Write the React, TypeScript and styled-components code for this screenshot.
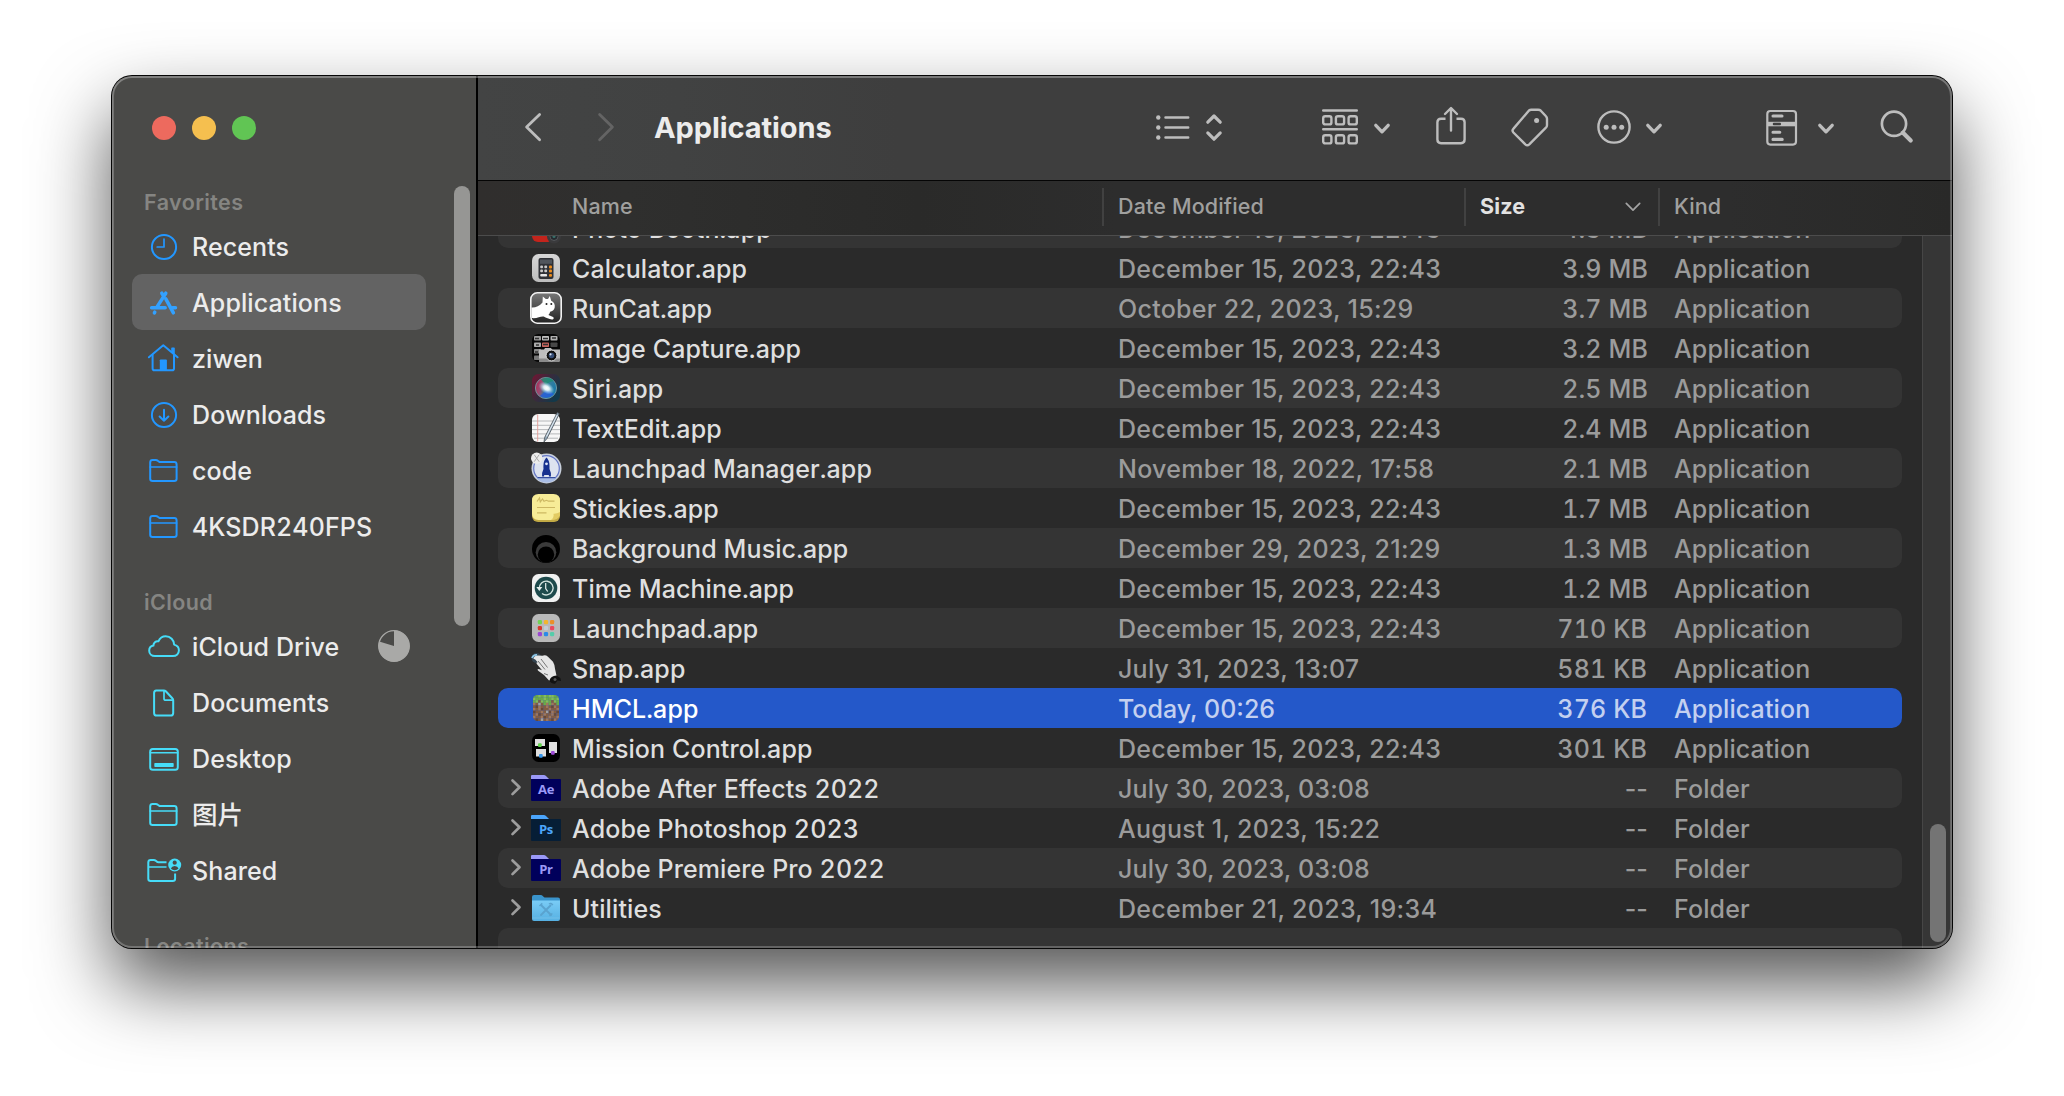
import React from "react";
import styled, { createGlobalStyle } from "styled-components";

const GlobalStyle = createGlobalStyle`
  html, body { margin: 0; padding: 0; background: #fff; }
  *, *::before, *::after { box-sizing: border-box; }
  svg { display: block; flex: none; overflow: visible; }
`;

const Screen = styled.div`
  width: 2064px;
  height: 1096px;
  padding: 76px 112px 148px;
  overflow: hidden;
  background: #fff;
  font-family: Inter, "Noto Sans CJK SC", "Liberation Sans", sans-serif;
`;

const Window = styled.div`
  position: relative;
  display: flex;
  width: 1840px;
  height: 872px;
  border-radius: 20px;
  background: #000;
  box-shadow: 0 0 0 1px #060606, 0 36px 76px rgba(0, 0, 0, 0.68);
`;

const Rim = styled.div`
  position: absolute;
  inset: 0;
  border-radius: 20px;
  pointer-events: none;
  box-shadow: inset 0 0 0 2px rgba(255, 255, 255, 0.23), inset 0 1px 0 1px rgba(255, 255, 255, 0.1);
`;

const Sidebar = styled.aside`
  display: flex;
  width: 364px;
  height: 872px;
  overflow: hidden;
  border-radius: 20px 0 0 20px;
  background: #4a4a48;
`;

const SidebarBody = styled.div`
  width: 342px;
  padding-left: 20px;
`;

const Lights = styled.div`
  display: flex;
  gap: 16px;
  height: 78px;
  padding: 40px 0 0 20px;
`;

const Light = styled.span<{ $color: string }>`
  width: 24px;
  height: 24px;
  border-radius: 50%;
  background: ${(p) => p.$color};
`;

const SideHeading = styled.h2`
  height: 64px;
  margin: 0;
  padding: 33px 0 0 12px;
  color: #858582;
  font-size: 21.5px;
  font-weight: 640;
  line-height: 30px;
  letter-spacing: 0.4px;
`;

const SideItem = styled.div<{ $active?: boolean; $color: string }>`
  display: flex;
  align-items: center;
  width: 294px;
  height: 56px;
  padding-left: 14px;
  border-radius: 10px;
  background: ${(p) => (p.$active ? "#636363" : "transparent")};
  color: ${(p) => p.$color};
`;

const SideLabel = styled.span<{ $cjk?: boolean }>`
  flex: 1;
  padding: 2px 0 0 10px;
  color: #ececec;
  font-size: ${(p) => (p.$cjk ? 25.5 : 25)}px;
  font-weight: ${(p) => (p.$cjk ? 500 : 460)};
  font-variant-numeric: tabular-nums;
  line-height: 40px;
  letter-spacing: 0.1px;
  white-space: nowrap;
`;

const PieSlot = styled.span`
  padding-right: 16px;
`;

const SideScroll = styled.div`
  width: 16px;
  height: 440px;
  margin-top: 110px;
  border-radius: 8px;
  background: #969694;
`;

const Main = styled.main`
  display: flex;
  flex-direction: column;
  width: 1474px;
  height: 872px;
  margin-left: 2px;
  overflow: hidden;
  border-radius: 0 20px 20px 0;
  background: #2a2a2a;
`;

const Toolbar = styled.header`
  display: flex;
  align-items: center;
  height: 105px;
  padding: 0 0 3px 43px;
  border-bottom: 1px solid #050505;
  background: linear-gradient(90deg, #434444 0, #414242 200px, #3e3e3e 420px, #3e3e3e 100%);
  color: #bdbdbd;
`;

const ToolIcon = styled.span<{ $gap: number; $dim?: boolean }>`
  margin-left: ${(p) => p.$gap}px;
  color: ${(p) => (p.$dim ? "#646464" : "inherit")};
`;

const Title = styled.h1`
  width: 466px;
  margin: 0 0 0 37px;
  padding-top: 2px;
  color: #ececec;
  font-size: 29px;
  font-weight: 700;
  line-height: 40px;
  letter-spacing: -0.08px;
`;

const HeaderRow = styled.div`
  display: flex;
  height: 55px;
  padding-top: 7px;
  border-bottom: 1px solid #4c4c4c;
  background: linear-gradient(90deg, #302e2d 0, #2f2f2e 150px, #2a2a29 440px, #2d2d2d 640px, #2d2d2d 1250px, #292928 100%);
`;

const HeaderCell = styled.div<{ $width: number; $pad: number; $strong?: boolean }>`
  display: flex;
  align-items: center;
  justify-content: space-between;
  width: ${(p) => p.$width}px;
  height: 38px;
  padding: 0 17px 3px ${(p) => p.$pad}px;
  border-right: 2px solid #414141;
  color: ${(p) => (p.$strong ? "#e2e2e2" : "#a0a09f")};
  font-size: 21.5px;
  font-weight: ${(p) => (p.$strong ? 700 : 500)};
  line-height: 26px;
  letter-spacing: 0.14px;
  white-space: nowrap;
  &:last-child { border-right: 0; }
`;

const ListArea = styled.div`
  display: flex;
  flex: 1;
  min-height: 0;
`;

const Rows = styled.div`
  display: flex;
  flex-direction: column;
  justify-content: flex-end;
  width: 1444px;
  padding: 0 20px;
  height: 712px;
  overflow: hidden;
`;

const Row = styled.div<{ $alt?: boolean; $selected?: boolean }>`
  display: flex;
  align-items: center;
  flex: none;
  width: 1404px;
  height: 40px;
  border-radius: 10px;
  background: ${(p) => (p.$selected ? "#2458c9" : p.$alt ? "#343434" : "transparent")};
  --name: ${(p) => (p.$selected ? "#ffffff" : "#dfdfdf")};
  --meta: ${(p) => (p.$selected ? "#c3d0f0" : "#9b9b9b")};
`;

const TailRow = styled(Row)`
  height: 20px;
  border-radius: 10px 10px 0 0;
`;

const Disclosure = styled.span`
  width: 32px;
  padding-left: 13px;
  color: #9d9d9d;
`;

const NameText = styled.span`
  width: 556px;
  padding: 2px 0 0 10px;
  color: var(--name);
  font-size: 25px;
  font-weight: 460;
  font-variant-numeric: tabular-nums;
  line-height: 38px;
  letter-spacing: 0.1px;
  white-space: nowrap;
`;

const MetaText = styled.span`
  padding-top: 2px;
  color: var(--meta);
  font-size: 25px;
  font-weight: 460;
  line-height: 38px;
  letter-spacing: 0.12px;
  white-space: nowrap;
`;

const DateText = styled(MetaText)<{ $track: number }>`
  width: 338px;
  letter-spacing: ${(p) => p.$track}px;
`;

const SizeText = styled(MetaText)<{ $inset: number; $tabular: boolean }>`
  width: 192px;
  padding-right: ${(p) => p.$inset}px;
  font-variant-numeric: ${(p) => (p.$tabular ? "tabular-nums" : "normal")};
  text-align: right;
`;

const KindText = styled(MetaText)`
  width: 200px;
  margin-left: 26px;
`;

const Track = styled.div`
  display: flex;
  align-items: flex-end;
  width: 30px;
  height: 712px;
  padding: 0 6px 6px 7px;
  border-left: 1px solid #464646;
  background: #363636;
`;

const Thumb = styled.div`
  width: 16px;
  height: 118px;
  border-radius: 8px;
  background: #747474;
`;

/* ---------- sidebar glyphs ---------- */

const Glyph = ({ children }: { children: React.ReactNode }) => (
  <svg width="36" height="36" viewBox="0 0 36 36" fill="none" stroke="currentColor" strokeWidth="2" strokeLinecap="round" strokeLinejoin="round">
    {children}
  </svg>
);

const ClockGlyph = () => (
  <Glyph>
    <circle cx="18" cy="19" r="12.1" />
    <path d="M18 11v8h-6.8" strokeWidth="1.7" />
  </Glyph>
);
const AppsGlyph = () => (
  <Glyph>
    <g strokeWidth="3.5">
      <path d="M19.8 9.2 11.2 22.6" />
      <path d="M15.8 9.2l1 1.6" />
      <path d="M19.8 14.8 27.4 28.8" />
      <path d="M5.6 23.7h13.6M26.5 23.7h3" />
      <path d="M8.8 28.2l-.4.7" />
    </g>
  </Glyph>
);
const HomeGlyph = () => (
  <Glyph>
    <path d="M2.9 17.3 17.3 5.3l14.3 12" />
    <path d="M6.6 15v13.4q0 1.8 1.8 1.8h17.8q1.8 0 1.8-1.8V15" />
    <path d="M26 8.2h2V13.5L26 12z" strokeWidth="1.6" fill="currentColor" />
    <path d="M13.8 30V20.3q0-.9.9-.9h5.3q.9 0 .9.9V30z" fill="currentColor" stroke="none" />
  </Glyph>
);
const DownloadGlyph = () => (
  <Glyph>
    <circle cx="18" cy="19" r="12.1" />
    <path d="M18 13.7v11M13.6 20.5l4.4 4.3 4.4-4.3" />
  </Glyph>
);
const FolderGlyph = () => (
  <Glyph>
    <path d="M4.2 26.7V10.4q0-2.4 2.4-2.4h3.2q1.2 0 2 .7l1 .8q.7.6 1.8.6h13.6q2.4 0 2.4 2.4v14.2q0 2.3-2.4 2.3H6.6q-2.4 0-2.4-2.3z" />
    <path d="M4.2 15h26.4" strokeWidth="1.7" />
  </Glyph>
);
const CloudGlyph = () => (
  <Glyph>
    <path d="M9 28.1c-3.4 0-5.8-2.4-5.8-5.4 0-2.7 1.7-4.6 4.2-5.1.1-2.9 2.2-4.7 5-4.3 1.4-3.2 4.2-5 7.3-5 4.8 0 8.3 3.7 8.4 8.3 2.9.7 4.8 3 4.8 5.7 0 3.3-2.5 5.8-6 5.8z" />
  </Glyph>
);
const DocGlyph = () => (
  <Glyph>
    <path d="M10.3 6.5h7.6q1.1 0 1.9.8l6.5 6.9q.9.9.9 2.1v12.6q0 2.6-2.6 2.6H10.7q-2.6 0-2.6-2.6V9q0-2.5 2.2-2.5z" />
    <path d="M18 7v7.4q0 1.8 1.8 1.8h7" strokeWidth="1.7" />
  </Glyph>
);
const DesktopGlyph = () => (
  <Glyph>
    <rect x="4.2" y="8.9" width="27.6" height="20.9" rx="2.6" />
    <path d="M4.2 12.8h27.6" strokeWidth="1.6" />
    <rect x="8.3" y="23" width="19.4" height="4" rx=".8" fill="currentColor" stroke="none" />
  </Glyph>
);
const SharedGlyph = () => (
  <Glyph>
    <path d="M20.5 10.2H12.5q-1.1 0-1.8-.7l-.9-.8q-.8-.7-2-.7H4.7Q2.3 8 2.3 10.4v16.4q0 2.3 2.4 2.3h22q2.4 0 2.4-2.3V21.5" strokeLinecap="butt" />
    <path d="M2.3 15h18.2" strokeWidth="1.7" strokeLinecap="butt" />
    <circle cx="28.7" cy="13" r="6.5" fill="currentColor" stroke="none" />
    <circle cx="28.7" cy="10.7" r="2.1" fill="#4a4a48" stroke="none" />
    <path d="M24.9 16.6q.8-2.6 3.8-2.6t3.8 2.6q-1.5 1.6-3.8 1.6t-3.8-1.6z" fill="#4a4a48" stroke="none" />
  </Glyph>
);
const PieGlyph = () => (
  <svg width="32" height="32" viewBox="0 0 32 32">
    <circle cx="16" cy="16" r="15.3" fill="none" stroke="#a9a9a7" strokeWidth="1.3" />
    <path d="M16 16V.5A15.5 15.5 0 1 1 1.2 11.4z" fill="#a9a9a7" />
  </svg>
);

/* ---------- toolbar glyphs ---------- */

const Tool = ({ w, h = 44, sw = 2.4, children }: { w: number; h?: number; sw?: number; children: React.ReactNode }) => (
  <svg width={w} height={h} viewBox={`0 0 ${w} ${h}`} fill="none" stroke="currentColor" strokeWidth={sw} strokeLinecap="round" strokeLinejoin="round">
    {children}
  </svg>
);
const ChevronDown = () => (
  <Tool w={16} sw={3.3}><path d="M1.8 20.3 8 26.8l6.2-6.5" /></Tool>
);
const Back = () => (
  <Tool w={20} sw={2.8}><path d="M18.6 9.5 5.6 22l13 12.7" /></Tool>
);
const Forward = () => (
  <Tool w={20} sw={2.8}><path d="M2.6 9.5 15.4 22l-12.8 12.7" /></Tool>
);
const ListView = () => (
  <Tool w={34} sw={2.5}>
    <path d="M9.5 12.5h22.7M9.5 22.5h22.7M9.5 32.5h22.7" />
    <g fill="currentColor" stroke="none">
      <circle cx="2.3" cy="12.5" r="2.2" /><circle cx="2.3" cy="22.5" r="2.2" /><circle cx="2.3" cy="32.5" r="2.2" />
    </g>
  </Tool>
);
const UpDown = () => (
  <Tool w={16} sw={3.2}><path d="M1.8 17.2 8 11l6.2 6.2M1.8 27.9 8 34.2l6.2-6.3" /></Tool>
);
const GroupView = () => (
  <Tool w={36}>
    <path d="M1.2 5.5h33.6M1.2 24.3h33.6" />
    {[11.2, 30.2].map((y) => [1.2, 13.9, 26.6].map((x) => (
      <rect key={`${x}-${y}`} x={x} y={y} width="8.2" height="8.2" rx="2" />
    )))}
  </Tool>
);
const Share = () => (
  <Tool w={30}>
    <path d="M9.5 13.7H5q-3.6 0-3.6 3.5v17.4q0 3.6 3.6 3.6h20q3.6 0 3.6-3.6V17.2q0-3.5-3.6-3.5h-4.5" strokeLinecap="butt" />
    <path d="M15 25.5V3.5M9 9l6-6 6 6" />
  </Tool>
);
const Tag = () => (
  <Tool w={38}>
    <path d="M18 5.5q1-.8 2.2-.8h7q1.5 0 2.6 1l5.2 5.6q1 1 1 2.4v6.5q0 1.5-1.1 2.5L18.3 39.3q-2 1.8-4 0L2.4 27.5q-1.8-2 .1-3.9z" />
    <circle cx="25.6" cy="15.6" r="2.5" fill="currentColor" stroke="none" />
  </Tool>
);
const More = () => (
  <Tool w={34}>
    <circle cx="17" cy="22" r="15.6" />
    <g fill="currentColor" stroke="none">
      <circle cx="9.2" cy="22.2" r="2.5" /><circle cx="17" cy="22.2" r="2.5" /><circle cx="24.7" cy="22.2" r="2.5" />
    </g>
  </Tool>
);
const Preview = () => (
  <Tool w={32} sw={2.2}>
    <rect x="1.3" y="6" width="28.7" height="33.6" rx="3" />
    <rect x="1.5" y="16.8" width="28.3" height="4.5" fill="currentColor" stroke="none" />
    <rect x="6.8" y="17.7" width="8.2" height="2.5" rx="1" fill="#3e3e3e" stroke="none" />
    <path d="M7 11h9M7 27.2h6.8M7 34.4h9.2" strokeWidth="3.1" />
  </Tool>
);
const Search = () => (
  <Tool w={34} sw={2.7}>
    <circle cx="14" cy="18.8" r="12.1" />
    <path d="M23 27.8 30.7 35.5" strokeWidth="4.2" />
  </Tool>
);
const SortChevron = () => (
  <svg width="16" height="10" viewBox="0 0 16 10" fill="none" stroke="#a4a4a4" strokeWidth="1.7" strokeLinecap="round" strokeLinejoin="round">
    <path d="M1.3 2.3 8 9.2l6.7-6.9" />
  </svg>
);
const RowChevron = () => (
  <svg width="10" height="18" viewBox="0 0 10 18" fill="none" stroke="currentColor" strokeWidth="2.7" strokeLinecap="round" strokeLinejoin="round">
    <path d="M1.5 1.5 8.5 8.3l-7 6.8" />
  </svg>
);

/* ---------- application icons ---------- */

const AppIcon = ({ children }: { children: React.ReactNode }) => (
  <svg width="32" height="32" viewBox="0 0 32 32">{children}</svg>
);

const PhotoBooth = () => (
  <AppIcon>
    <rect x="2" y="2" width="22" height="28" rx="6" fill="#c3241c" />
    <circle cx="24" cy="24.5" r="7" fill="#3a3a3c" />
    <circle cx="24" cy="24.5" r="4" fill="#252a2e" stroke="#55585c" strokeWidth="1" />
    <circle cx="24" cy="24.5" r="1.5" fill="#39706a" />
  </AppIcon>
);
const Calculator = () => (
  <AppIcon>
    <defs><linearGradient id="calc" x1="0" y1="0" x2="0" y2="1"><stop offset="0" stopColor="#d6d6d6" /><stop offset="1" stopColor="#bdbdbd" /></linearGradient></defs>
    <rect x="2" y="2" width="28" height="28" rx="6.5" fill="url(#calc)" />
    <rect x="8.5" y="6" width="15" height="21" rx="2" fill="#2f3136" />
    <rect x="10" y="7.5" width="12" height="4.3" fill="#50555c" />
    {[13.6, 17.6].map((y) => [10.2, 14.3].map((x) => <rect key={`${x}${y}`} x={x} y={y} width="2.8" height="2.7" rx="1" fill="#c9c9c9" />))}
    <rect x="10.2" y="22" width="6.9" height="2.6" rx="1" fill="#e6e6e6" />
    {[13.6, 17.6, 22].map((y) => <rect key={y} x="19" y={y} width="3" height="2.8" rx="1" fill="#ee8d1d" />)}
  </AppIcon>
);
const RunCat = () => (
  <AppIcon>
    <defs><linearGradient id="cat" x1="0" y1="0" x2="0" y2="1"><stop offset="0" stopColor="#777" /><stop offset="1" stopColor="#222" /></linearGradient></defs>
    <rect x=".8" y=".8" width="30.4" height="30.4" rx="6.5" fill="url(#cat)" stroke="#f2f2f2" strokeWidth="1.6" />
    <path d="M1.5 15.5c4 .3 8-1.5 11-5l.3-6 3 2.6h2.2l1.8-3 1.4 4.6c3 1.4 4 4 3.500 6.800-.5 2.600-2.500 3.900-4.600 4.300-.3 1.500-1 2.500-1.600 3.200l4 1.700c1.900.8 1.400 2.800-.6 2.800-2.900-.1-5.900-1.800-8.200-2.900-3.100-.6-6.200 2.200-12.200 1.500z" fill="#fff" />
    <circle cx="16.5" cy="12" r="1" fill="#222" /><circle cx="21.3" cy="12" r="1" fill="#222" />
  </AppIcon>
);
const ImageCapture = () => (
  <AppIcon>
    <rect x="2" y="2" width="28" height="28" rx="6.5" fill="#070707" />
    {[[4, 4, "#9b9b9b"], [12, 4, "#c2c2c2"], [20.5, 4, "#b1b1b1"], [4, 10.5, "#aaa"], [12, 10.5, "#c8645d"], [20.5, 10.5, "#474747"], [4, 17, "#888"], [4, 23.5, "#777"]].map(([x, y, c], i) => (
      <rect key={i} x={x as number} y={y as number} width="7" height="4.5" rx=".8" fill={c as string} />
    ))}
    <path d="M5 6.5h4M13 6.5h5M22 6h4M6 13h3M13 12.500h5M5 20h3" stroke="#333" strokeWidth="1.3" />
    <path d="M9 17.5h5l1-1.5h6l1 1.5h8V28q0 2-2 2H9z" fill="#bdbdbd" />
    <path d="M9 26.5h21V28q0 2-2 2H9z" fill="#8a8a8a" />
    <circle cx="21.5" cy="23.5" r="5.4" fill="#111" stroke="#e4e4e4" strokeWidth=".9" />
    <circle cx="21.5" cy="23.5" r="2.8" fill="#354c74" /><circle cx="20.5" cy="22.3" r="1.1" fill="#dbe6f6" />
  </AppIcon>
);
const Siri = () => (
  <AppIcon>
    <defs>
      <linearGradient id="siriBg" x1="0" y1="0" x2="1" y2=".6"><stop offset="0" stopColor="#741432" /><stop offset=".5" stopColor="#3a2a3c" /><stop offset="1" stopColor="#12394a" /></linearGradient>
      <linearGradient id="siriOrb" x1="0" y1="0" x2="1" y2=".3"><stop offset="0" stopColor="#b0244f" /><stop offset=".35" stopColor="#9c4a72" /><stop offset=".6" stopColor="#3d7f9a" /><stop offset="1" stopColor="#1d7aa8" /></linearGradient>
      <radialGradient id="siriGlow"><stop offset="0" stopColor="#fff" /><stop offset=".35" stopColor="#e9f6fa" stopOpacity=".95" /><stop offset="1" stopColor="#9ad8ee" stopOpacity="0" /></radialGradient>
    </defs>
    <rect x="2" y="2" width="28" height="28" rx="6.5" fill="url(#siriBg)" />
    <circle cx="16" cy="16" r="10.6" fill="url(#siriOrb)" stroke="#6f9aa2" strokeWidth=".9" />
    <path d="M11 7.5q7-4.5 13 1.5-5 .5-8 4z" fill="#1b8d70" opacity=".75" />
    <path d="M10 24q7 4.5 14-2l-7-4.5z" fill="#245be0" opacity=".75" />
    <ellipse cx="16.5" cy="16" rx="8.5" ry="5.5" fill="url(#siriGlow)" transform="rotate(30 16.5 16)" />
  </AppIcon>
);
const TextEdit = () => (
  <AppIcon>
    <rect x="2" y="2" width="28" height="28" rx="6" fill="#f7f7f7" />
    <path d="M2 9h28M2 13.3h28M2 17.6h28M2 21.9h28M4 26.2h24" stroke="#aeb0b2" strokeWidth=".9" />
    <path d="M7.7 2.5v27" stroke="#e39a94" strokeWidth=".9" />
    <path d="M27.3.5 29.3 1.7 17 26.5 14 30l.6-4.5z" fill="#8fa4b5" stroke="#4e565c" strokeWidth=".8" />
    <path d="M27.3 3 16.5 24.5" stroke="#dfeaf2" strokeWidth="1.1" />
  </AppIcon>
);
const LaunchpadManager = () => (
  <AppIcon>
    <circle cx="16.5" cy="16.5" r="15" fill="#c9d0dc" />
    <circle cx="16.5" cy="16.5" r="12.8" fill="#dde3f0" stroke="#6577c7" strokeWidth="1.2" />
    <path d="M6 25.5h21q-4 5-10.5 5t-10.5-5z" fill="#a9bde6" />
    <path d="M16.5 5.5c2.6 2.7 3.3 5.8 3 11.5l1.4 4v3.5h-2v-1.5h-4.800v1.500h-2V21l1.400-4c-.3-5.700.4-8.800 3-11.500z" fill="#17318f" />
    <circle cx="16.5" cy="11.8" r="1.4" fill="#dfe7fb" />
    <path d="M7.5 25.7h18" stroke="#17318f" strokeWidth="1" />
    <circle cx="6.7" cy="6.2" r="5.7" fill="#ececec" />
    <path d="M4.2 2.7l5 7M9.2 2.7l-5 7" stroke="#aaa" strokeWidth="1" />
  </AppIcon>
);
const Stickies = () => (
  <AppIcon>
    <rect x="2" y="3" width="28" height="27" rx="6" fill="#c2aa45" />
    <path d="M8.5 2h15Q30 2 30 8.5V21.5L22.5 28H8.5Q2 28 2 21.5v-13Q2 2 8.5 2z" fill="#f7ec97" />
    <path d="M30 20q-3 2-6.5 1.8.8 3.7-2.5 6.2 6.5.3 9-4.5z" fill="#e2cb62" />
    <path d="M7 9.5l2.5-3.5.8 3.8L12.500 7l1.500 2.300 2.500-1 2 .9h6M7 15.500h18M7 20.800h9.500" fill="none" stroke="#cdb863" strokeWidth="1.2" />
  </AppIcon>
);
const BackgroundMusic = () => (
  <AppIcon>
    <circle cx="16" cy="17" r="14" fill="#000" />
    <circle cx="16" cy="20.3" r="10.3" fill="#3a3a3a" />
    <circle cx="16" cy="22.6" r="8.2" fill="#000" />
  </AppIcon>
);
const TimeMachine = () => (
  <AppIcon>
    <rect x="2" y="2" width="28" height="28" rx="6.5" fill="#f0f1f1" />
    <circle cx="16" cy="16" r="11.3" fill="#1d4a4c" />
    <path d="M9.3 16.5A6.9 6.9 0 1 1 12 21.5" fill="none" stroke="#d2e3df" strokeWidth="1.4" />
    <path d="M6.3 15h6l-3 4z" fill="#e6f1ef" />
    <path d="M15.7 11v5.5l2 3" fill="none" stroke="#e6f1ef" strokeWidth="1.2" />
  </AppIcon>
);
const Launchpad = () => (
  <AppIcon>
    <rect x="2" y="2" width="28" height="28" rx="6.5" fill="#b9b9b9" />
    {["#71d454", "#f2b62e", "#eb8f28", "#d8382c", "#c4ccd5", "#e9495f", "#9b46d2", "#2b8be8", "#55cdaa"].map((c, i) => (
      <rect key={i} x={7.8 + (i % 3) * 6.1} y={8 + Math.floor(i / 3) * 6} width="4.2" height="4.2" rx="1.3" fill={c} />
    ))}
  </AppIcon>
);
const Snap = () => (
  <AppIcon>
    <circle cx="6.5" cy="6" r="5" fill="#3d5a70" opacity=".55" />
    <path d="M3.5 6.5q.8-3 4-3l5 .2q3-1 5.5 1l5 5q1.8 3 2 7l1.5 7q-.5 3-4 4.5l-3.5.3-5-5.5-5.5-4q-2-2 .2-2l3.3 1.3-5-6q-1.3-2 .7-2l-2.700-3q-1.700-.3-1.500-.8z" fill="#e6e6e6" />
    <path d="M8 9l7 8.5M11 7l6.5 8.5M14 21.5l4 1.5" stroke="#777" strokeWidth="1" fill="none" />
    <path d="M2 6q1.5-3.5 5-3" stroke="#8cc4e4" strokeWidth="1.8" fill="none" />
    <path d="M19.5 28.5q1-4.5 7-5l3.8 2.5.7 3-3.5-.5-2.5 3.3q-4 0-5.5-3.3z" fill="#121212" />
    <circle cx="25" cy="27.5" r="1.5" fill="#555" />
  </AppIcon>
);

const DIRT = [
  "ggGgGgGGgg",
  "GgggGggGgG",
  "gGbGgGgbGg",
  "dbsbgdgdbg",
  "bDdbbdbDdb",
  "dbdDbbdbbd",
  "DbbdbsDdbD",
  "bdDbdbbdDb",
  "dbbdDbdbbd",
  "bDbsbdbDdb",
];
const DIRT_COLORS: Record<string, string> = { g: "#6dab45", G: "#86bd58", b: "#835d41", d: "#a0775a", D: "#684935", s: "#a2a2a2" };
const Hmcl = () => (
  <AppIcon>
    <defs><clipPath id="dirt"><rect x="3" y="3" width="26" height="26" rx="4.5" /></clipPath></defs>
    <g clipPath="url(#dirt)">
      {DIRT.map((line, y) => line.split("").map((c, x) => (
        <rect key={`${x}-${y}`} x={3 + x * 2.6} y={3 + y * 2.6} width="2.7" height="2.7" fill={DIRT_COLORS[c]} />
      )))}
    </g>
  </AppIcon>
);
const MissionControl = () => (
  <AppIcon>
    <rect x="2" y="2" width="28" height="28" rx="6.5" fill="#000" />
    <rect x="5" y="7" width="10" height="7" fill="#dedede" />
    <rect x="6" y="17" width="10" height="7.5" fill="#dedede" />
    <rect x="19" y="10" width="8" height="11" fill="#dedede" />
    <rect x="8" y="11.3" width="3.7" height="3.7" rx="1" fill="#60d54c" />
    <rect x="9" y="22" width="3.7" height="3.7" rx="1" fill="#3797ec" />
    <rect x="21" y="19" width="3.7" height="3.7" rx="1" fill="#9e4bd6" />
  </AppIcon>
);

const AdobeLabel = styled.text`
  font-family: "Open Sans", "Noto Sans", sans-serif;
  font-size: 13px;
  font-weight: 700;
  letter-spacing: -0.2px;
`;
const AdobeFolder = ({ tab, body, ink, label }: { tab: string; body: string; ink: string; label: string }) => (
  <AppIcon>
    <path d="M1 9V4q0-1 1-1h11.8q1.2 0 2.2.9L19 7v2z" fill={tab} />
    <path d="M1 7h29q1 0 1 1v20q0 1-1 1H2q-1 0-1-1z" fill={body} />
    <AdobeLabel x="16" y="21.7" textAnchor="middle" fill={ink}>{label}</AdobeLabel>
  </AppIcon>
);
const UtilitiesFolder = () => (
  <AppIcon>
    <defs><linearGradient id="util" x1="0" y1="0" x2="0" y2="1"><stop offset="0" stopColor="#7accf6" /><stop offset="1" stopColor="#56b0e2" /></linearGradient></defs>
    <path d="M2 12V5q0-2 2-2h6.5q1.5 0 2.5 1.3l.8.7q.7.6 1.7.6H28q2 0 2 2V12z" fill="#3a94cc" />
    <path d="M2 8.5h28V27q0 2-2 2H4q-2 0-2-2z" fill="url(#util)" />
    <path d="M11.5 13.5l9.5 9.5M20.5 13.5 11 23" stroke="#5aa3cf" strokeWidth="1.9" strokeLinecap="round" />
    <path d="M9.5 14l2.8-2.6M19 12q2.2-1.5 3.8 1.2M19.5 24l2.8-2.5" stroke="#5aa3cf" strokeWidth="1.5" fill="none" />
    <path d="M2.5 26h27" stroke="#78c3ea" strokeWidth=".8" />
  </AppIcon>
);

/* ---------- data ---------- */

type Entry = { icon: React.ReactNode; name: string; date: string; size: string; kind: string; track?: number };

const DEC = "December 15, 2023, 22:43";
const entries: Entry[] = [
  { icon: <PhotoBooth />, name: "Photo Booth.app", date: DEC, size: "4.3 MB", kind: "Application" },
  { icon: <Calculator />, name: "Calculator.app", date: DEC, size: "3.9 MB", kind: "Application" },
  { icon: <RunCat />, name: "RunCat.app", date: "October 22, 2023, 15:29", size: "3.7 MB", kind: "Application" },
  { icon: <ImageCapture />, name: "Image Capture.app", date: DEC, size: "3.2 MB", kind: "Application" },
  { icon: <Siri />, name: "Siri.app", date: DEC, size: "2.5 MB", kind: "Application" },
  { icon: <TextEdit />, name: "TextEdit.app", date: DEC, size: "2.4 MB", kind: "Application" },
  { icon: <LaunchpadManager />, name: "Launchpad Manager.app", date: "November 18, 2022, 17:58", size: "2.1 MB", kind: "Application" },
  { icon: <Stickies />, name: "Stickies.app", date: DEC, size: "1.7 MB", kind: "Application" },
  { icon: <BackgroundMusic />, name: "Background Music.app", date: "December 29, 2023, 21:29", size: "1.3 MB", kind: "Application" },
  { icon: <TimeMachine />, name: "Time Machine.app", date: DEC, size: "1.2 MB", kind: "Application" },
  { icon: <Launchpad />, name: "Launchpad.app", date: DEC, size: "710 KB", kind: "Application" },
  { icon: <Snap />, name: "Snap.app", date: "July 31, 2023, 13:07", size: "581 KB", kind: "Application", track: 0.24 },
  { icon: <Hmcl />, name: "HMCL.app", date: "Today, 00:26", size: "376 KB", kind: "Application", track: 0 },
  { icon: <MissionControl />, name: "Mission Control.app", date: DEC, size: "301 KB", kind: "Application" },
  { icon: <AdobeFolder tab="#9a99f8" body="#00005b" ink="#9a99f8" label="Ae" />, name: "Adobe After Effects 2022", date: "July 30, 2023, 03:08", size: "--", kind: "Folder", track: 0.13 },
  { icon: <AdobeFolder tab="#4ba5fb" body="#061e36" ink="#4ba5fb" label="Ps" />, name: "Adobe Photoshop 2023", date: "August 1, 2023, 15:22", size: "--", kind: "Folder", track: 0.27 },
  { icon: <AdobeFolder tab="#9a99f8" body="#00005b" ink="#9a99f8" label="Pr" />, name: "Adobe Premiere Pro 2022", date: "July 30, 2023, 03:08", size: "--", kind: "Folder", track: 0.13 },
  { icon: <UtilitiesFolder />, name: "Utilities", date: "December 21, 2023, 19:34", size: "--", kind: "Folder" },
];

const sizeInset = (size: string) => (size.endsWith("KB") ? 1 : 0);

const BLUE = "#2397ff";
const CYAN = "#46dcf8";

const favorites = [
  { icon: <ClockGlyph />, label: "Recents" },
  { icon: <AppsGlyph />, label: "Applications", active: true },
  { icon: <HomeGlyph />, label: "ziwen" },
  { icon: <DownloadGlyph />, label: "Downloads" },
  { icon: <FolderGlyph />, label: "code" },
  { icon: <FolderGlyph />, label: "4KSDR240FPS" },
];

const cloud = [
  { icon: <CloudGlyph />, label: "iCloud Drive", syncing: true },
  { icon: <DocGlyph />, label: "Documents" },
  { icon: <DesktopGlyph />, label: "Desktop" },
  { icon: <FolderGlyph />, label: "图片", cjk: true },
  { icon: <SharedGlyph />, label: "Shared" },
];

export default function App() {
  return (
    <Screen>
      <GlobalStyle />
      <Window>
        <Sidebar>
          <SidebarBody>
            <Lights>
              <Light $color="#ed6a5e" />
              <Light $color="#f5bf4f" />
              <Light $color="#61c554" />
            </Lights>
            <SideHeading>Favorites</SideHeading>
            {favorites.map((f) => (
              <SideItem key={f.label} $active={f.active} $color={f.active ? "#33a1ff" : BLUE}>
                {f.icon}
                <SideLabel>{f.label}</SideLabel>
              </SideItem>
            ))}
            <SideHeading>iCloud</SideHeading>
            {cloud.map((c) => (
              <SideItem key={c.label} $color={CYAN}>
                {c.icon}
                <SideLabel $cjk={c.cjk}>{c.label}</SideLabel>
                {c.syncing && <PieSlot><PieGlyph /></PieSlot>}
              </SideItem>
            ))}
            <SideHeading>Locations</SideHeading>
          </SidebarBody>
          <SideScroll />
        </Sidebar>
        <Main>
          <Toolbar>
            <ToolIcon $gap={0}><Back /></ToolIcon>
            <ToolIcon $gap={56} $dim><Forward /></ToolIcon>
            <Title>Applications</Title>
            <ToolIcon $gap={36}><ListView /></ToolIcon>
            <ToolIcon $gap={16}><UpDown /></ToolIcon>
            <ToolIcon $gap={100}><GroupView /></ToolIcon>
            <ToolIcon $gap={16}><ChevronDown /></ToolIcon>
            <ToolIcon $gap={46}><Share /></ToolIcon>
            <ToolIcon $gap={45}><Tag /></ToolIcon>
            <ToolIcon $gap={48}><More /></ToolIcon>
            <ToolIcon $gap={15}><ChevronDown /></ToolIcon>
            <ToolIcon $gap={104}><Preview /></ToolIcon>
            <ToolIcon $gap={20}><ChevronDown /></ToolIcon>
            <ToolIcon $gap={46}><Search /></ToolIcon>
          </Toolbar>
          <HeaderRow>
            <HeaderCell $width={626} $pad={94}>Name</HeaderCell>
            <HeaderCell $width={362} $pad={14}>Date Modified</HeaderCell>
            <HeaderCell $width={194} $pad={14} $strong>Size<SortChevron /></HeaderCell>
            <HeaderCell $width={292} $pad={14}>Kind</HeaderCell>
          </HeaderRow>
          <ListArea>
            <Rows>
              {entries.map((e, i) => (
                <Row key={e.name} $alt={i % 2 === 0} $selected={e.name === "HMCL.app"}>
                  <Disclosure>{e.kind === "Folder" && <RowChevron />}</Disclosure>
                  {e.icon}
                  <NameText>{e.name}</NameText>
                  <DateText $track={e.track ?? 0.29}>{e.date}</DateText>
                  <SizeText $inset={sizeInset(e.size)} $tabular={e.kind !== "Folder"}>{e.size}</SizeText>
                  <KindText>{e.kind}</KindText>
                </Row>
              ))}
              <TailRow $alt />
            </Rows>
            <Track><Thumb /></Track>
          </ListArea>
        </Main>
        <Rim />
      </Window>
    </Screen>
  );
}
